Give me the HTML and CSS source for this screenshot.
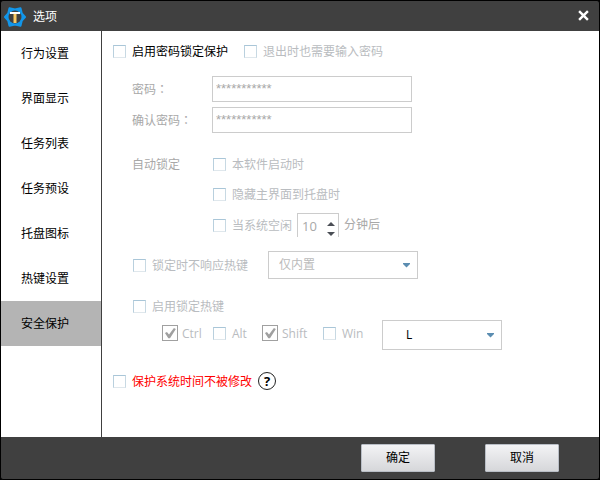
FILE: index.html
```
<!DOCTYPE html>
<html lang="zh-CN">
<head>
<meta charset="UTF-8">
<meta name="viewport" content="width=device-width, initial-scale=1.0">
<title>选项</title>
<link rel="stylesheet" href="styles.css">
</head>
<body>

<div class="window">
    <header class="titlebar">
        <svg class="logo" viewBox="0 0 22 22" aria-hidden="true">
            <path d="M21 11L17.800 14.500 16.500 19.800 11 18.500 5.500 19.800 4.200 14.500 1 11 4.200 7.500 5.500 2.200 11 3.500 16.500 2.200 17.800 7.500Z" fill="#1296ea" stroke="#1296ea" stroke-width="2" stroke-linejoin="round"/>
            <circle cx="11" cy="11" r="6.500" fill="#404040"/>
            <path d="M6 6h10v2H6z" fill="#ffffff"/>
            <path d="M9.500 8h3v9h-3z" fill="#f8c964"/>
        </svg>
        <h1 class="title">选项</h1>
        <button type="button" class="close" aria-label="关闭">
            <svg viewBox="0 0 10 10" width="11" height="11"><path d="M1 1l8 8M9 1l-8 8" stroke="#fff" stroke-width="2.200"/></svg>
        </button>
    </header>

    <div class="body">
        <nav class="sidebar">
            <a href="#">行为设置</a>
            <a href="#">界面显示</a>
            <a href="#">任务列表</a>
            <a href="#">任务预设</a>
            <a href="#">托盘图标</a>
            <a href="#">热键设置</a>
            <a href="#" class="active">安全保护</a>
        </nav>

        <form class="content" id="options">
            <div class="row">
                <label class="check lock"><input type="checkbox">启用密码锁定保护</label>
                <label class="check dim"><input type="checkbox" disabled>退出时也需要输入密码</label>
            </div>

            <div class="group fields">
                <label for="pwd">密码<span class="colon" lang="zh-TW">：</span></label>
                <input type="text" class="text" id="pwd" value="***********" disabled>
                <label for="pwd2">确认密码<span class="colon" lang="zh-TW">：</span></label>
                <input type="text" class="text" id="pwd2" value="***********" disabled>
            </div>

            <div class="group auto">
                <span class="legend">自动锁定</span>
                <div class="list">
                    <div class="row"><label class="check dim"><input type="checkbox" disabled>本软件启动时</label></div>
                    <div class="row"><label class="check dim"><input type="checkbox" disabled>隐藏主界面到托盘时</label></div>
                    <div class="row idle">
                        <label class="check dim"><input type="checkbox" disabled>当系统空闲</label>
                        <span class="spinner">
                            <input type="text" id="minutes" value="10" disabled>
                            <svg viewBox="0 0 8 16" width="8" height="16" aria-hidden="true"><path d="M0 5l4-4 4 4zM0 11h8l-4 4z" fill="#4a4e55"/></svg>
                        </span>
                        <label for="minutes">分钟后</label>
                    </div>
                </div>
            </div>

            <div class="group ignore">
                <label class="check dim"><input type="checkbox" disabled>锁定时不响应热键</label>
                <span class="select scope">
                    <select aria-label="热键范围" disabled><option>仅内置</option></select>
                </span>
            </div>

            <div class="group hotkey">
                <label class="check dim"><input type="checkbox" disabled>启用锁定热键</label>
            </div>
            <div class="keys">
                <label class="check dim ticked"><input type="checkbox" checked disabled>Ctrl</label>
                <label class="check dim"><input type="checkbox" disabled>Alt</label>
                <label class="check dim ticked"><input type="checkbox" checked disabled>Shift</label>
                <label class="check dim"><input type="checkbox" disabled>Win</label>
                <span class="select key">
                    <select aria-label="按键"><option>L</option></select>
                </span>
            </div>

            <div class="row protect">
                <label class="check warn"><input type="checkbox">保护系统时间不被修改</label>
                <button type="button" class="help" aria-label="帮助">?</button>
            </div>
        </form>
    </div>

    <footer class="footer">
        <button type="submit" form="options">确定</button>
        <button type="button">取消</button>
    </footer>
</div>

</body>
</html>
```
FILE: styles.css
```
* {
    box-sizing: border-box;
}
body {
    margin: 0;
    font: 12px/18px "Open Sans", "Noto Sans CJK SC", sans-serif;
    color: #000;
    background: #000;
}
button, input, select {
    font: inherit;
    color: inherit;
    margin: 0;
    padding: 0;
}
.window {
    display: flex;
    flex-direction: column;
    min-height: 100vh;
    border: 1px solid #000;
    border-radius: 3px;
    background: #404040;
}

/* title bar */
.titlebar {
    display: flex;
    align-items: center;
    height: 30px;
    padding: 2px 10px 0 3px;
}
.logo {
    width: 22px;
    height: 22px;
}
.title {
    margin: 0 auto 0 7px;
    font-size: 12px;
    font-weight: normal;
    color: #fff;
}
.close {
    display: flex;
    margin-bottom: 4px;
    border: none;
    background: none;
    cursor: pointer;
}

/* sidebar */
.body {
    display: flex;
    flex: 1;
    background: #fff;
}
.sidebar {
    width: 101px;
    border-right: 1px solid #404040;
}
.sidebar a {
    display: block;
    padding-left: 20px;
    line-height: 45px;
    color: #000;
    text-decoration: none;
}
.sidebar a.active {
    background: #b4b4b4;
}

/* options */
.content {
    flex: 1;
    padding: 5px 11px;
    color: #a8a8a8;
}
.row {
    display: flex;
    align-items: center;
    height: 30px;
}
.group {
    margin-left: 19px;
}
.check {
    display: flex;
    align-items: center;
    gap: 6px;
    padding-top: 2px;
    color: #000;
}
.check input {
    appearance: none;
    width: 13px;
    height: 13px;
    margin-bottom: 2px;
    border: 1px solid;
    border-color: #a9c6d8 #c8d9e3 #dfe7ec #b9d0de;
    background: #fff;
}
.check.lock {
    margin-right: 16px;
}
.check.dim {
    color: #b9bcc0;
}
.check.warn {
    color: #f00;
}
.check.ticked {
    gap: 4px;
}
.check.ticked input {
    display: grid;
    width: 16px;
    height: 16px;
    border-color: #a0a0a0;
}
.check.ticked input::before {
    content: "";
    background: #a0a0a0;
    clip-path: polygon(14% 50%, 28% 42%, 43% 60%, 78% 14%, 92% 22%, 50% 88%, 38% 88%);
}

.fields {
    display: grid;
    grid-template-columns: 80px 200px;
    align-items: center;
    row-gap: 5px;
    margin-top: 10px;
}
.colon {
    font-family: "Noto Sans CJK TC", sans-serif;
}
.text {
    height: 26px;
    padding: 0 4px 2px 3px;
    border: 1px solid #ccc;
    background: #fff;
    font: 13px "Liberation Sans", sans-serif;
}

.auto {
    display: flex;
    margin-top: 16px;
}
.legend {
    width: 81px;
    padding-top: 2px;
    line-height: 28px;
}
.idle {
    gap: 5px;
    padding-top: 2px;
}
.spinner {
    display: flex;
    align-items: center;
    width: 42px;
    height: 24px;
    padding: 0 3px 0 4px;
    border: 1px solid #ccc;
    border-bottom: none;
}
.spinner input {
    flex: 1;
    min-width: 0;
    border: none;
    background: none;
    font-size: 13px;
}
.spinner svg {
    align-self: flex-end;
}

.ignore {
    display: flex;
    align-items: center;
    gap: 20px;
    margin-top: 12px;
    padding-left: 1px;
}
.select {
    display: grid;
    align-items: center;
    border: 1px solid #ccc;
}
.select::after {
    content: "";
    grid-area: 1 / 1;
    justify-self: end;
    width: 7px;
    height: 5px;
    margin-right: 7px;
    background: #5b8db1;
    clip-path: polygon(0 0, 100% 0, 100% 30%, 50% 100%, 0 30%);
    pointer-events: none;
}
.select select {
    grid-area: 1 / 1;
    appearance: none;
    width: 100%;
    height: 100%;
    border: none;
    background: none;
    opacity: 1;
}
.scope {
    width: 150px;
    height: 28px;
    color: #bbb;
}
.scope select {
    padding-left: 10px;
}
.key {
    width: 120px;
    height: 30px;
    color: #000;
}
.key select {
    padding-left: 23px;
}

.hotkey {
    margin-top: 14px;
    padding-left: 1px;
}
.hotkey .check {
    height: 26px;
}
.keys {
    display: grid;
    grid-template-columns: 51px 49px 61px 59px auto;
    justify-content: start;
    align-items: center;
    margin: 1px 0 0 49px;
}
.keys .check {
    padding: 0 0 2px;
}

.protect {
    gap: 6px;
    margin-top: 16px;
}
.help {
    width: 18px;
    height: 18px;
    border: 1px solid #222;
    border-radius: 50%;
    background: #fff;
    color: #000;
    font-size: 13px;
    font-weight: bold;
    line-height: 16px;
    cursor: pointer;
}

/* footer */
.footer {
    display: flex;
    justify-content: flex-end;
    align-items: center;
    gap: 50px;
    height: 42px;
    padding-right: 40px;
}
.footer button {
    width: 74px;
    height: 28px;
    border: 1px solid #b9bec6;
    border-radius: 1px;
    background: linear-gradient(#f3f3f5, #d6d7da);
    color: #000;
    cursor: pointer;
}
```
